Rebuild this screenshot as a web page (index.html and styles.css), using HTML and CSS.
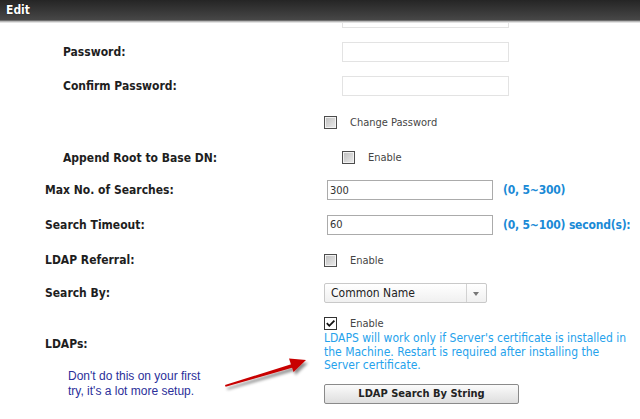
FILE: index.html
```html
<!DOCTYPE html>
<html lang="en">
<head>
  <meta charset="UTF-8">
  <meta name="viewport" content="width=device-width, initial-scale=1.0">
  <title>Edit</title>
  <link rel="stylesheet" href="styles.css">
</head>
<body>

  <div class="window">
    <div class="titlebar">Edit</div>

    <div class="form">
      <!-- scrolled partly under the title bar -->
      <div class="row sub first">
        <div class="label"></div>
        <div class="field"><input type="text" class="text pale"></div>
      </div>

      <div class="row sub">
        <div class="label">Password:</div>
        <div class="field"><input type="password" class="text pale"></div>
      </div>

      <div class="row sub">
        <div class="label">Confirm Password:</div>
        <div class="field"><input type="password" class="text pale"></div>
      </div>

      <div class="row change">
        <div class="label"></div>
        <div class="field">
          <label class="check"><span class="box"></span>Change Password</label>
        </div>
      </div>

      <div class="row sub append">
        <div class="label">Append Root to Base DN:</div>
        <div class="field">
          <label class="check"><span class="box"></span>Enable</label>
        </div>
      </div>

      <div class="row">
        <div class="label">Max No. of Searches:</div>
        <div class="field">
          <input type="text" class="text num" value="300">
          <span class="hint">(0, 5~300)</span>
        </div>
      </div>

      <div class="row timeout">
        <div class="label">Search Timeout:</div>
        <div class="field">
          <input type="text" class="text num" value="60">
          <span class="hint">(0, 5~100) second(s):</span>
        </div>
      </div>

      <div class="row referral">
        <div class="label">LDAP Referral:</div>
        <div class="field">
          <label class="check"><span class="box"></span>Enable</label>
        </div>
      </div>

      <div class="row searchby">
        <div class="label">Search By:</div>
        <div class="field">
          <div class="select">
            <span class="value">Common Name</span>
            <span class="caret"></span>
          </div>
        </div>
      </div>

      <div class="row ldaps">
        <div class="label">LDAPs:</div>
        <div class="field stack">
          <label class="check">
            <span class="box checked">
              <svg width="11" height="11" viewBox="0 0 11 11"><path d="M1.8 5.2 L4.3 7.8 L9.4 2.6" fill="none" stroke="#111" stroke-width="1.8"/></svg>
            </span>Enable
          </label>
          <p class="note">LDAPS will work only if Server's certificate is installed in<br>the Machine. Restart is required after installing the<br>Server certificate.</p>
        </div>
      </div>

      <div class="row buttons">
        <div class="label"></div>
        <div class="field"><button class="btn">LDAP Search By String</button></div>
      </div>
    </div>

    <!-- hand-written remark with its arrow -->
    <p class="remark">Don't do this on your first<br>try, it's a lot more setup.</p>
    <svg class="arrow" width="110" height="65" viewBox="0 0 110 65">
      <defs>
        <filter id="shade" x="-20%" y="-40%" width="150%" height="190%">
          <feDropShadow dx="2" dy="3" stdDeviation="1.6" flood-color="#000" flood-opacity="0.45"/>
        </filter>
      </defs>
      <g filter="url(#shade)" fill="#c80000">
        <polygon points="15,45 82,24 83,27.5 15.6,46.8"/>
        <polygon points="96,20 79,18.5 83.5,32"/>
      </g>
    </svg>
  </div>

</body>
</html>
```

FILE: styles.css
```css
body {
  margin: 0;
  font-family: "DejaVu Sans Condensed", "DejaVu Sans", sans-serif;
  font-size: 11px;
  color: #222;
  background-color: #fff;
}

.window {
  position: relative;
  height: 419px;
  overflow: hidden;
}

.titlebar {
  position: relative;
  z-index: 1;
  height: 20px;
  padding-left: 6px;
  line-height: 21px;
  font-size: 12px;
  font-weight: bold;
  color: #fff;
  text-shadow: 0 0 1px #000;
  background: linear-gradient(#252525, #474747);
  border-bottom: 1px solid #6e6e6e;
  box-shadow: 0 1px 0 #b9b9b9, 0 2px 0 #e2e2e2;
}

.row {
  display: grid;
  grid-template-columns: 279px auto;
  align-items: center;
  height: 34px;
  padding-left: 45px;
}

.row.sub {
  padding-left: 63px;
}

.row.first {
  margin-top: -20px;
}

.row.change {
  height: 39px;
}

.row.append {
  height: 31px;
}

.row.timeout {
  height: 35px;
}

.row.referral {
  height: 36px;
}

.row.searchby {
  height: 30px;
}

.row.ldaps {
  height: auto;
  padding-top: 8px;
}

.row.buttons {
  height: auto;
  margin-top: 11px;
}

.label {
  font-size: 12px;
  font-weight: bold;
  color: #1e1e1e;
}

.field {
  display: flex;
  align-items: center;
  gap: 10px;
}

.field.stack {
  flex-direction: column;
  align-items: flex-start;
  gap: 0;
}

.text {
  box-sizing: border-box;
  width: 167px;
  height: 20px;
  margin: 0;
  padding: 0 2px;
  font-family: inherit;
  font-size: 11px;
  color: #333;
  border: 1px solid #ababab;
  background: #fff;
}

.text.pale {
  border-color: #e3e3e3;
}

.text.num {
  width: 166px;
  margin-left: 3px;
}

.hint {
  font-size: 12px;
  font-weight: bold;
  letter-spacing: -0.2px;
  color: #1a8ad6;
}

.check {
  display: flex;
  align-items: center;
  gap: 13px;
  height: 14px;
  color: #454545;
}

.box {
  box-sizing: border-box;
  width: 13px;
  height: 13px;
  border: 1px solid #4d4d4d;
  background: linear-gradient(135deg, #bdbdbd, #ececec);
  box-shadow: inset 0 0 0 1px #f2f2f2;
}

.box.checked {
  display: flex;
  align-items: center;
  justify-content: center;
  background: #fff;
  box-shadow: none;
  border-color: #333;
}

.note {
  margin: 2px 0 0;
  font-size: 12px;
  line-height: 13.5px;
  color: #25a2ec;
}

.select {
  box-sizing: border-box;
  display: flex;
  width: 163px;
  height: 20px;
  border: 1px solid #c9c9c9;
  border-radius: 2px;
  background: linear-gradient(#fff, #f0f0f0);
}

.select .value {
  flex: 1;
  padding-left: 6px;
  line-height: 18px;
  font-size: 12px;
  color: #222;
}

.select .caret {
  position: relative;
  width: 19px;
  border-left: 1px solid #d2d2d2;
}

.select .caret::after {
  content: "";
  position: absolute;
  left: 6px;
  top: 8px;
  border-left: 3.5px solid transparent;
  border-right: 3.5px solid transparent;
  border-top: 4px solid #777;
}

.btn {
  box-sizing: border-box;
  width: 195px;
  height: 20px;
  padding: 0;
  font-family: inherit;
  font-size: 11px;
  font-weight: bold;
  color: #222;
  border: 1px solid #8a8a8a;
  border-radius: 2px;
  background: linear-gradient(#fbfbfb, #dedede);
}

.remark {
  position: absolute;
  left: 68px;
  top: 369px;
  margin: 0;
  font-family: "Liberation Sans", Arial, sans-serif;
  font-size: 12px;
  line-height: 15px;
  color: #2b2f9a;
}

.arrow {
  position: absolute;
  left: 210px;
  top: 340px;
}
```
